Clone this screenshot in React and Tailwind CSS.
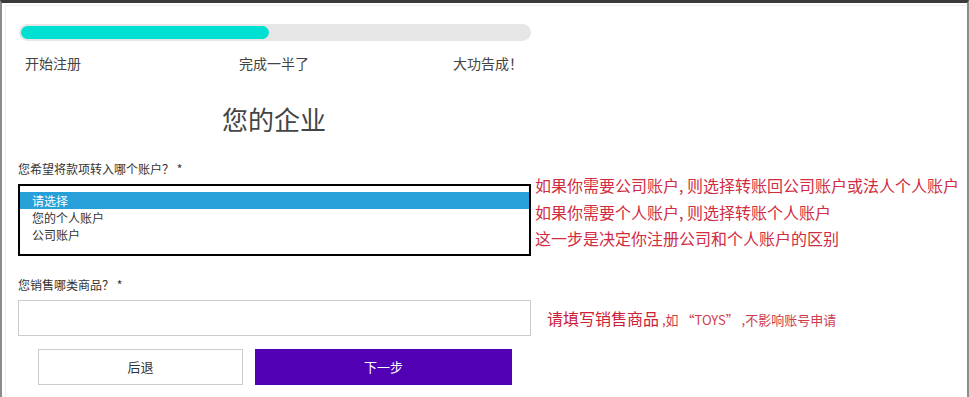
export default function App() {
  const font = { fontFamily: '"Noto Sans CJK SC", "Noto Sans", sans-serif' };
  return (
    <div
      style={font}
      className="w-[969px] h-[397px] bg-white border-t-[3px] border-t-[#3a3a3a] border-l-2 border-l-[#8c8c8c] border-r-2 border-r-[#8c8c8c] overflow-hidden"
    >
      <div className="h-full ml-[3px] mt-[2px] border-t border-l border-[#efefef] pl-[12px] pt-[18px]">
        {/* progress */}
        <div className="w-[512px] ml-[1px] h-[17px] rounded-full bg-[#e6e6e6] p-[2px]">
          <div className="w-[248px] h-full rounded-full bg-[#00e0d2]" />
        </div>
        <div className="w-[512px] grid grid-cols-3 mt-[12px] text-[14px] leading-[20px] text-[#444]">
          <span className="pl-[7px]">开始注册</span>
          <span className="text-center">完成一半了</span>
          <span className="text-right pr-[7px]">大功告成！</span>
        </div>
        <div className="w-[512px] text-center mt-[28px] text-[26px] leading-[36px] text-[#444]">
          您的企业
        </div>

        {/* account select */}
        <div className="flex mt-[23px]">
          <div className="w-[513px]">
            <div className="text-[12px] leading-[18px] text-[#333]">您希望将款项转入哪个账户？ *</div>
            <div className="mt-[6px] h-[72px] border-2 border-black pt-[6px] text-[12px] leading-[17px] text-[#333]">
              <div className="h-[17px] bg-[#279fd8] text-white pl-[12px]">请选择</div>
              <div className="h-[17px] pl-[12px]">您的个人账户</div>
              <div className="h-[17px] pl-[12px]">公司账户</div>
            </div>
          </div>
          <div className="ml-[4px] mt-[12px] text-[16px] leading-[26.5px] text-[#d22c40] whitespace-nowrap">
            <div>如果你需要公司账户, 则选择转账回公司账户或法人个人账户</div>
            <div>如果你需要个人账户, 则选择转账个人账户</div>
            <div>这一步是决定你注册公司和个人账户的区别</div>
          </div>
        </div>

        {/* goods */}
        <div className="mt-[20px] text-[12px] leading-[18px] text-[#333]">您销售哪类商品？ *</div>
        <div className="flex items-center mt-[6px]">
          <div className="w-[513px] h-[36px] border border-[#cccccc] bg-white" />
          <div className="ml-[16px] whitespace-nowrap text-[#cc2038]">
            <span className="text-[16px]">请填写销售商品</span>
            <span className="text-[13px] text-[#cf3b4d]"> ,如 “TOYS” ,不影响账号申请</span>
          </div>
        </div>

        {/* buttons */}
        <div className="flex mt-[13px] ml-[20px] gap-[12px]">
          <button className="w-[205px] h-[36px] border border-[#cccccc] bg-white text-[13px] text-[#333]">后退</button>
          <button className="w-[257px] h-[36px] bg-[#5200b4] text-[13px] text-white">下一步</button>
        </div>
      </div>
    </div>
  );
}
